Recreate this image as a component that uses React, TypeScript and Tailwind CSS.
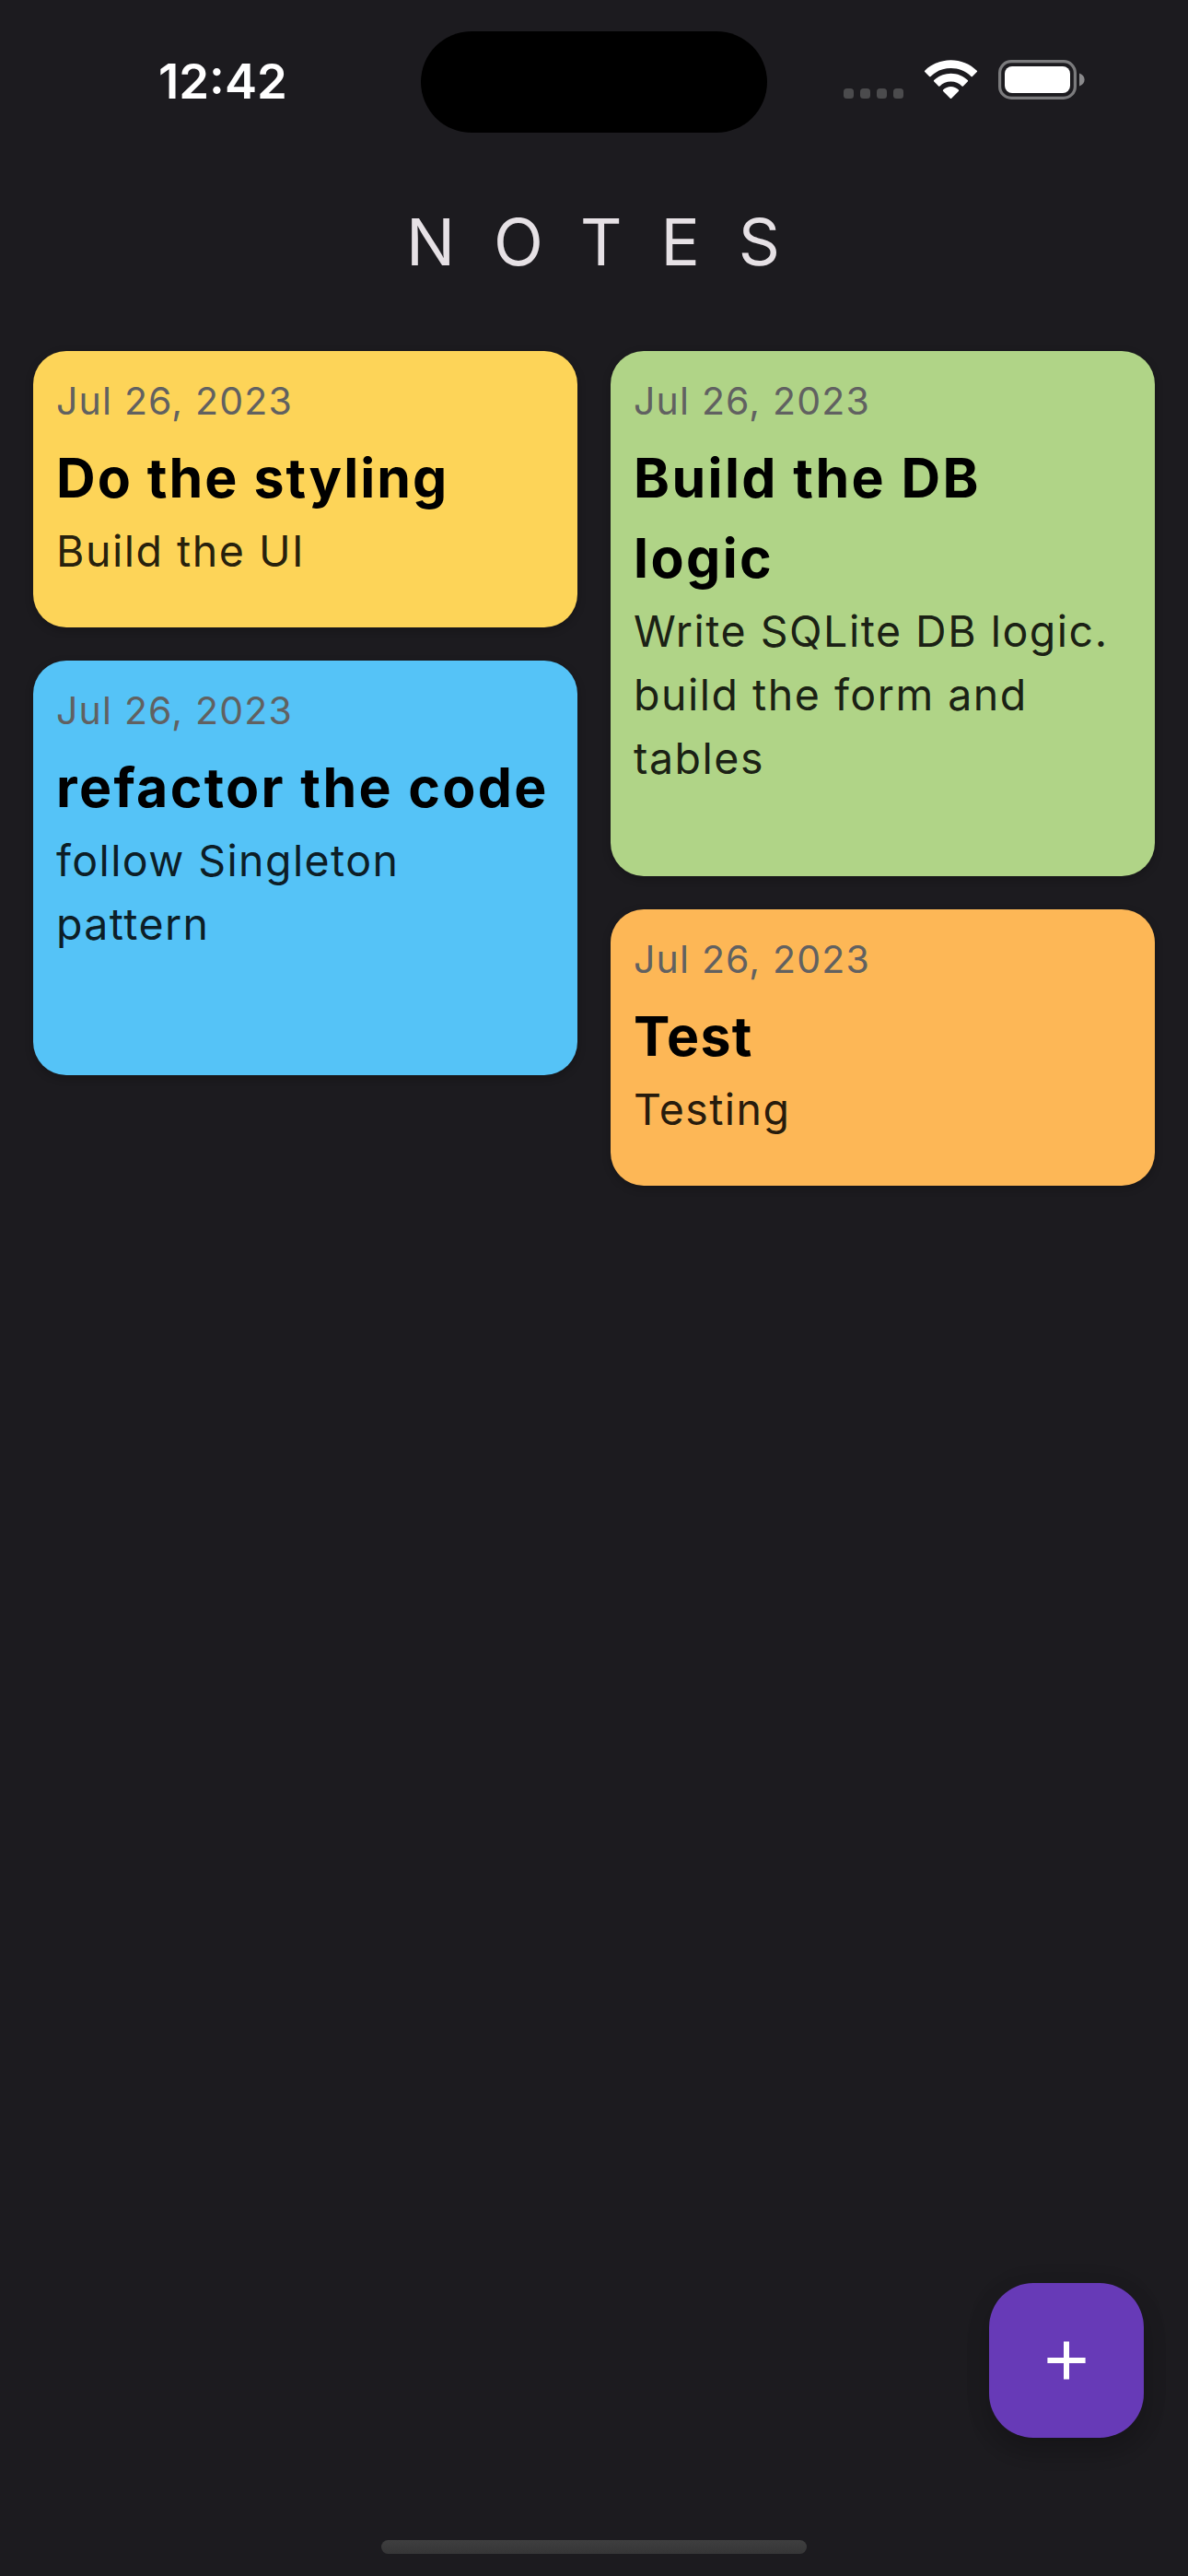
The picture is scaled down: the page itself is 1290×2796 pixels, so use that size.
type Note = {
  date: string;
  title: string[];
  body: string[];
  color: string;
  height: string;
  titleTracking: string;
  bodyTracking: string;
};

const leftNotes: Note[] = [
  {
    date: "Jul 26, 2023",
    title: ["Do the styling"],
    body: ["Build the UI"],
    color: "bg-[#fdd458]",
    height: "h-[300px]",
    titleTracking: "tracking-[2.02px]",
    bodyTracking: "tracking-[1.5px]",
  },
  {
    date: "Jul 26, 2023",
    title: ["refactor the code"],
    body: ["follow Singleton", "pattern"],
    color: "bg-[#55c3f7]",
    height: "h-[450px]",
    titleTracking: "tracking-[2.34px]",
    bodyTracking: "tracking-[1.4px]",
  },
];

const rightNotes: Note[] = [
  {
    date: "Jul 26, 2023",
    title: ["Build the DB", "logic"],
    body: ["Write SQLite DB logic.", "build the form and", "tables"],
    color: "bg-[#b0d487]",
    height: "h-[570px]",
    titleTracking: "tracking-[2.4px]",
    bodyTracking: "tracking-[1.5px]",
  },
  {
    date: "Jul 26, 2023",
    title: ["Test"],
    body: ["Testing"],
    color: "bg-[#fdb756]",
    height: "h-[300px]",
    titleTracking: "tracking-[1.3px]",
    bodyTracking: "tracking-[1.4px]",
  },
];

function NoteCard({ note }: { note: Note }) {
  return (
    <article
      className={`${note.height} ${note.color} whitespace-nowrap rounded-[36px] py-6 pl-[25px] pr-6 shadow-[0_3px_9px_1px_rgba(0,0,0,0.2)]`}
    >
      <p className="text-[41px] leading-[60px] tracking-[1.2px] text-[#616161]">{note.date}</p>
      <h2 className={`mt-[10px] text-[59px] font-bold leading-[87px] text-black ${note.titleTracking}`}>
        {note.title.map((line) => (
          <span key={line} className="block">
            {line}
          </span>
        ))}
      </h2>
      <p className={`mt-[2px] text-[46.5px] leading-[69px] text-black/87 ${note.bodyTracking}`}>
        {note.body.map((line) => (
          <span key={line} className="block">
            {line}
          </span>
        ))}
      </p>
    </article>
  );
}

function SignalDots() {
  return (
    <div className="mt-[96px] flex gap-[7px]">
      {[0, 1, 2, 3].map((i) => (
        <span key={i} className="size-[11px] rounded-[3.5px] bg-[#4b4b4d]" />
      ))}
    </div>
  );
}

function WifiIcon() {
  return (
    <svg className="ml-[22px] mt-[65px] h-[43px] w-[59px]" viewBox="0 0 59 43" fill="#fff">
      <path d="M29.5 .2C40 .2 50.300 4.300 57.8 11.7Q58.4 12.4 57.8 13.1L52.900 18Q52.2 18.6 51.5 18C45.500 12.200 38 9.1 29.5 9.1S13.500 12.200 7.500 18Q6.8 18.6 6.1 18L1.2 13.1Q.6 12.4 1.2 11.7C8.700 4.300 19 .2 29.5 .2Z" />
      <path d="M29.5 14.8C36.5 14.8 43 17.500 47.8 22.1Q48.4 22.8 47.8 23.500L42.900 28.4Q42.2 29 41.500 28.4C38.300 25.3 34.2 23.6 29.5 23.6S20.700 25.3 17.500 28.4Q16.800 29 16.1 28.4L11.2 23.500Q10.6 22.8 11.2 22.1C16 17.500 22.5 14.8 29.5 14.8Z" />
      <path d="M29.5 29C32.6 29 35.5 30.300 37.9 32.5Q38.6 33.2 37.9 33.9L30.2 41.7Q29.5 42.4 28.8 41.7L21.1 33.900Q20.4 33.2 21.1 32.5C23.5 30.300 26.4 29 29.5 29Z" />
    </svg>
  );
}

function BatteryIcon() {
  return (
    <svg className="ml-[22px] mt-[65px] h-[43px] w-[95px]" viewBox="0 0 95 43">
      <rect x="1.600" y="1.600" width="81.800" height="39.800" rx="12.500" fill="none" stroke="#7b7b7d" strokeWidth="3.2" />
      <rect x="7" y="7" width="71" height="29" rx="8" fill="#fff" />
      <path d="M88 14.6C91.6 15.800 93.6 18.6 93.6 21.6S91.6 27.400 88 28.600Z" fill="#8a8a8c" />
    </svg>
  );
}

function StatusBar() {
  return (
    <header className="flex h-[180px] items-start">
      <time className="ml-[172px] mt-[56px] w-[285px] text-[52.7px] font-semibold leading-[64px] text-white">
        12:42
      </time>
      <div className="mt-[34px] h-[110px] w-[376px] rounded-full bg-black" />
      <div className="ml-[83px] flex items-start">
        <SignalDots />
        <WifiIcon />
        <BatteryIcon />
      </div>
    </header>
  );
}

export default function App() {
  return (
    <main className="flex h-[2796px] w-[1290px] flex-col overflow-hidden bg-[#1c1b1f] font-['Inter',sans-serif]">
      <StatusBar />
      <h1 className="ml-[441px] h-[201px] whitespace-nowrap pt-[41px] text-[70.5px] font-normal leading-[84px] tracking-[42px] text-[#e6e1e5]">
        NOTES
      </h1>
      <section className="grid grid-cols-2 items-start gap-9 px-9">
        {[leftNotes, rightNotes].map((column, i) => (
          <div key={i} className="flex flex-col gap-9">
            {column.map((note) => (
              <NoteCard key={note.title[0]} note={note} />
            ))}
          </div>
        ))}
      </section>
      <button
        aria-label="Add note"
        className="mb-[111px] mr-12 mt-auto flex size-[168px] items-center justify-center self-end rounded-[48px] bg-[#673ab7] shadow-[0_12px_24px_rgba(0,0,0,0.2),0_3px_30px_rgba(0,0,0,0.08)]"
      >
        <svg className="size-[42px]" viewBox="0 0 42 42" fill="#fff">
          <path d="M18 .4h6v17.600h17.600v6H24v17.600h-6V24H.4v-6h17.600z" />
        </svg>
      </button>
      <div className="mb-6 h-[15px] w-[462px] shrink-0 self-center rounded-full bg-linear-to-b from-[#3e3e3f] to-[#363637]" />
    </main>
  );
}
